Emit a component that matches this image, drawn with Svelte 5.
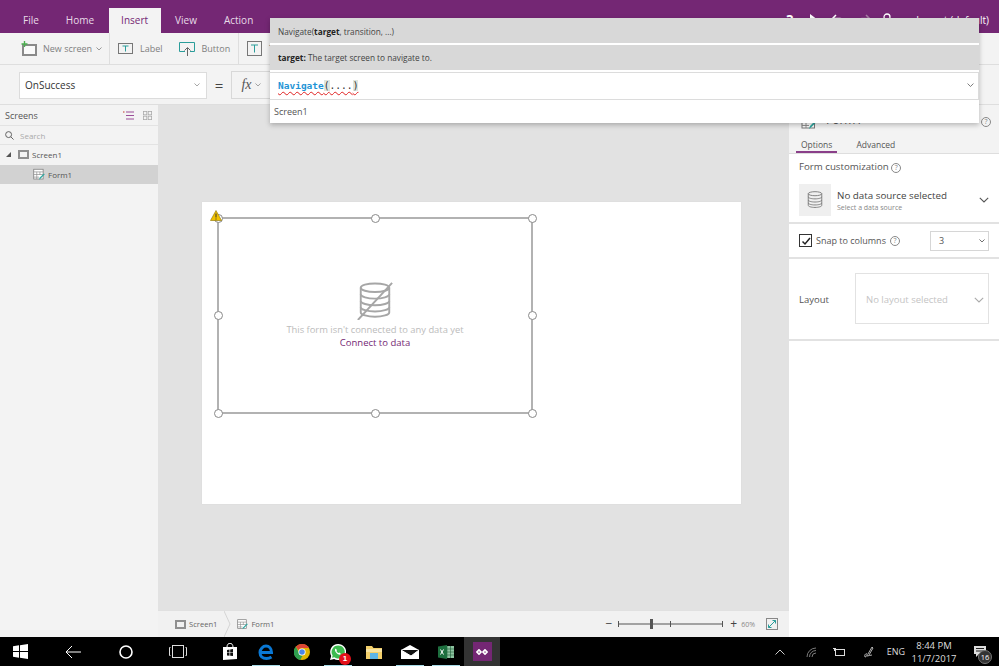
<script lang="ts">
  const tabs = ["File", "Home", "Insert", "View", "Action"];
  const handles = [
    [0, 0], [50, 0], [100, 0],
    [0, 50], [100, 50],
    [0, 100], [50, 100], [100, 100],
  ];
</script>

{#snippet formIcon()}
  <svg class="ico-form" viewBox="0 0 16 16" width="16" height="16" fill="none">
    <rect x="1" y="1" width="12.5" height="13" fill="#fff" stroke="#7a7a7a" />
    <path d="M1 4.5h12.5M1 8h12.5M1 11.5h7M5 4.5V14M9.2 4.5v4" stroke="#8a8a8a" stroke-width=".9" />
    <path d="M8 15l1-3 5.5-5.5 1.2 1.2L10 13.5z" fill="#2fa7a0" />
  </svg>
{/snippet}

{#snippet dbIcon(size: number, color: string, slash: boolean)}
  <svg viewBox="0 0 40 40" width={size} height={size} fill="none" stroke={color} stroke-width="2">
    <ellipse cx="20" cy="6" rx="15" ry="4.5" />
    <path d="M5 6v26c0 2.500 7 4.500 15 4.500S35 34.500 35 32V6" />
    <path d="M5 13c0 2.500 7 4.500 15 4.500S35 15.500 35 13M5 20c0 2.500 7 4.500 15 4.500S35 22.500 35 20M5 26.500c0 2.500 7 4.500 15 4.500s15-2 15-4.500" />
    {#if slash}<path d="M38 1L2 40" />{/if}
  </svg>
{/snippet}

{#snippet chevron(w: number, color: string)}
  <svg class="chev" viewBox="0 0 10 6" width={w} height={w * 0.6} fill="none" stroke={color} stroke-width="1.100"><path d="M.8.8L5 5l4.200-4.200" /></svg>
{/snippet}

{#snippet help()}
  <span class="help">?</span>
{/snippet}

<div class="app">
  <header class="tabs">
    {#each tabs as t}
      <span class="tab" class:active={t === "Insert"}>{t}</span>
    {/each}
    <div class="quick">
      <span class="q">?</span>
      <svg viewBox="0 0 10 12" width="10" height="12" fill="#fff"><path d="M1 0l8 6-8 6z" /></svg>
      <svg viewBox="0 0 14 12" width="14" height="12" fill="none" stroke="#fff" stroke-width="1.500"><path d="M5 1L1.500 4.500 5 8M2 4.500h7a3.500 3.500 0 010 7H6" /></svg>
      <svg viewBox="0 0 14 12" width="14" height="12" fill="none" stroke="#a77fa5" stroke-width="1.500"><path d="M9 1l3.500 3.500L9 8M12 4.500H5a3.500 3.500 0 000 7h3" /></svg>
      <svg class="person" viewBox="0 0 12 14" width="12" height="14" fill="none" stroke="#fff" stroke-width="1.300"><circle cx="6" cy="4" r="3" /><path d="M1 13c0-3 2-5 5-5s5 2 5 5" /></svg>
      <span class="q-text">Layout (default)</span>
    </div>
  </header>

  <div class="toolbar">
    <div class="group first">
      <svg viewBox="0 0 16 15" width="16" height="15" fill="none">
        <rect x="2" y="4" width="13" height="10" fill="#fafafa" stroke="#8a8a8a" stroke-width="2" />
        <path d="M3.500 0v6M.5 3h6" stroke="#4caf50" stroke-width="1.400" />
      </svg>
      <span>New screen</span>
      {@render chevron(6, "#666")}
    </div>
    <div class="group">
      <svg viewBox="0 0 15 11" width="15" height="11" fill="none">
        <rect x=".5" y=".5" width="14" height="10" stroke="#777" />
        <path d="M4.500 3h6M7.500 3v5.500" stroke="#2a9d9a" />
      </svg>
      <span>Label</span>
      <svg class="gap-l" viewBox="0 0 16 14" width="16" height="14" fill="none">
        <path d="M6 9.500H.5V.5h15v9H11" stroke="#2a9d9a" />
        <path d="M8.500 14V6M5.500 8.500l3-3 3 3" stroke="#666" />
      </svg>
      <span>Button</span>
    </div>
    <div class="group">
      <svg viewBox="0 0 15 15" width="15" height="15" fill="none">
        <rect x=".5" y=".5" width="14" height="14" stroke="#777" />
        <path d="M4 4h7M7.500 4v7.500" stroke="#2a9d9a" />
      </svg>
      <span>T</span>
    </div>
  </div>

  <div class="formula">
    <div class="prop">
      <span>OnSuccess</span>
      {@render chevron(6, "#777")}
    </div>
    <span class="equals">=</span>
    <div class="fx"><i>fx</i>{@render chevron(6, "#777")}</div>
  </div>

  <div class="main">
    <aside class="left">
      <div class="left-head">
        <span>Screens</span>
        <div class="views">
          <svg viewBox="0 0 11 9" width="11" height="9" fill="none" stroke="#9b4f9a" stroke-width="1.100"><path d="M3 1h8M3 4.500h8M3 8h8" /><path d="M0 1h1.500" stroke="#c0392b" /></svg>
          <svg viewBox="0 0 9 9" width="9" height="9" fill="none" stroke="#aaa" stroke-width=".8"><rect x=".4" y=".4" width="3.400" height="3.400" /><rect x="5.200" y=".4" width="3.400" height="3.400" /><rect x=".4" y="5.200" width="3.400" height="3.400" /><rect x="5.200" y="5.200" width="3.400" height="3.400" /></svg>
        </div>
      </div>
      <div class="search">
        <svg viewBox="0 0 10 10" width="9" height="9" fill="none" stroke="#555"><circle cx="4" cy="4" r="3.300" /><path d="M6.500 6.500L9.500 9.500" /></svg>
        <span>Search</span>
      </div>
      <div class="tree-row">
        <span class="tri"></span>
        <span class="screen-ico"></span>
        <span>Screen1</span>
      </div>
      <div class="tree-row sel">
        {@render formIcon()}
        <span>Form1</span>
      </div>
    </aside>

    <section class="center">
      <div class="canvas">
        <div class="board">
          <div class="form">
            <svg class="warn" viewBox="0 0 12 11" width="12" height="11">
              <path d="M6 .5L11.500 10.500H.5z" fill="#f2c200" stroke="#8a7000" stroke-width=".6" />
              <path d="M6 3.500v4M6 8.500v1" stroke="#333" />
            </svg>
            <div class="handles">
              {#each handles as [x, y]}
                <span class="handle" style="left:{x}%;top:{y}%"></span>
              {/each}
            </div>
            <div class="empty">
              {@render dbIcon(38, "#a6a6a6", true)}
              <span class="empty-text">This form isn't connected to any data yet</span>
              <span class="connect">Connect to data</span>
            </div>
          </div>
        </div>
      </div>
      <footer class="status">
        <span class="crumb">
          <span class="screen-ico small"></span>
          <span>Screen1</span>
        </span>
        <svg class="crumb-sep" viewBox="0 0 7 26" width="7" height="26" fill="none" stroke="#d4d4d4"><path d="M0 0l6 13-6 13" /></svg>
        <span class="crumb">
          {@render formIcon()}
          <span>Form1</span>
        </span>
        <div class="zoom">
          <span class="zbtn">−</span>
          <svg class="slider" viewBox="0 0 105 10" width="105" height="10" fill="#555">
            <rect x="0" y="4.500" width="105" height="1" />
            <rect x="0" y="2" width="1" height="6" />
            <rect x="104" y="2" width="1" height="6" />
            <rect x="52" y="2" width="1" height="6" />
            <rect x="32" y="0" width="3" height="10" />
          </svg>
          <span class="zbtn">+</span>
          <span class="pct">60%</span>
          <svg viewBox="0 0 12 12" width="12" height="12" fill="none">
            <rect x=".5" y=".5" width="11" height="11" stroke="#888" />
            <path d="M2.500 9.500l7-7M2.500 6.500v3h3M6.500 2.500h3v3" stroke="#2a9d9a" />
          </svg>
        </div>
      </footer>
    </section>

    <aside class="right">
      <div class="right-top">
        <div class="right-title">
          {@render formIcon()}
          <span class="title-text">Form1</span>
          <span class="spacer"></span>
          {@render help()}
        </div>
        <div class="right-tabs">
          <span class="rtab on">Options</span>
          <span class="rtab">Advanced</span>
        </div>
      </div>
      <div class="block custom">
        <div class="block-title">Form customization {@render help()}</div>
        <div class="source">
          <span class="source-ico">{@render dbIcon(18, "#777", false)}</span>
          <div class="source-text">
            <span class="src-main">No data source selected</span>
            <span class="src-sub">Select a data source</span>
          </div>
          {@render chevron(10, "#555")}
        </div>
      </div>
      <div class="block snap">
        <span class="check">
          <svg viewBox="0 0 10 10" width="10" height="10" fill="none" stroke="#222" stroke-width="1.500"><path d="M1.500 5.500l2.500 2.500 5-6" /></svg>
        </span>
        <span>Snap to columns</span>
        {@render help()}
        <span class="spacer"></span>
        <div class="num"><span>3</span>{@render chevron(6, "#222")}</div>
      </div>
      <div class="block layout">
        <span class="layout-label">Layout</span>
        <div class="layout-box">
          <span>No layout selected</span>
          {@render chevron(10, "#aaa")}
        </div>
      </div>
    </aside>
  </div>

  <!-- formula suggestion popup, sits over the ribbon and the panels -->
  <div class="popup">
    <div class="hint first-hint">Navigate(<b>target</b>, transition, ...)</div>
    <div class="hint">
      <span><b>target:</b> The target screen to navigate to.</span>
    </div>
    <div class="editor">
      <span class="code"><span class="kw">Navigate</span><span class="par">(</span>....<span class="par">)</span></span>
      {@render chevron(7, "#555")}
    </div>
    <div class="suggest">Screen1</div>
  </div>

  <footer class="taskbar">
    <div class="cell wide">
      <svg viewBox="0 0 15 15" width="15" height="15" fill="#fff"><path d="M0 2.200L6 1.300V7H0zM7 1.200L15 0v7H7zM0 8h6v5.700L0 12.800zM7 8h8v7l-8-1.200z" /></svg>
    </div>
    <div class="cell nav">
      <svg viewBox="0 0 16 14" width="16" height="14" fill="none" stroke="#fff"><path d="M7 1L1 7l6 6M1 7h15" /></svg>
    </div>
    <div class="cell nav">
      <svg viewBox="0 0 14 14" width="14" height="14" fill="none" stroke="#fff" stroke-width="1.600"><circle cx="7" cy="7" r="6" /></svg>
    </div>
    <div class="cell nav">
      <svg viewBox="0 0 18 13" width="18" height="13" fill="none" stroke="#ddd"><rect x="3.500" y=".5" width="11" height="12" /><path d="M1.500 2.500H.5v8h1M16.500 2.500h1v8h-1" /></svg>
    </div>
    <div class="cell store">
      <svg viewBox="0 0 16 17" width="16" height="17"><path d="M1 4h14v12l-14 1z" fill="#fff" /><path d="M5 4c0-5 6-5 6 0" fill="none" stroke="#fff" /><path d="M5 7l2.500-.4v2.800H5zM8.200 6.500l2.800-.4v3.300H8.200zM5 10h2.500v2.700L5 12.500zM8.200 10H11v3l-2.800-.3z" fill="#111" /></svg>
    </div>
    <div class="cell run">
      <svg viewBox="0 0 16 16" width="16" height="16" fill="none" stroke="#0a78d4" stroke-width="3"><path d="M2 8.500h11.500c0-4-2.500-6.500-5.500-6.500S2 5 2 8.500 4.500 14.500 8.500 14.500c2 0 3.500-.5 5-1.500" /></svg>
    </div>
    <div class="cell">
      <svg viewBox="0 0 16 16" width="16" height="16"><circle cx="8" cy="8" r="8" fill="#e0b400" /><path d="M8 0a8 8 0 017 4H8a4 4 0 00-3.500 2L1.800 2.800A8 8 0 018 0z" fill="#db4437" /><path d="M1.800 2.800L5 8.500a4 4 0 003.500 3.500L6 16A8 8 0 011.800 2.800z" fill="#2e9e4f" /><circle cx="8" cy="8" r="3.600" fill="#fff" /><circle cx="8" cy="8" r="2.800" fill="#4a86e8" /></svg>
    </div>
    <div class="cell run wa">
      <svg viewBox="0 0 16 16" width="16" height="16"><path d="M8 0a8 8 0 00-6.800 12L0 16l4.100-1.100A8 8 0 108 0z" fill="#fff" /><path d="M8 1.500a6.500 6.500 0 00-5.400 10l-.6 2.300 2.400-.6A6.500 6.500 0 108 1.500z" fill="#3dbb4f" /><path d="M5.500 4.500c-1 1-.6 2.800 1 4.500s3.500 2.200 4.500 1l-1.500-1.500-1 .5c-.8-.3-1.600-1.100-2-2l.5-1z" fill="#fff" /></svg>
      <span class="badge">1</span>
    </div>
    <div class="cell">
      <svg viewBox="0 0 16 14" width="16" height="14"><path d="M0 1h6l1.500 2H16v11H0z" fill="#f2cf6b" /><rect x="0" y="4" width="16" height="3" fill="#f8e3a0" /><rect x="4" y="8" width="8" height="6" fill="#5db5e8" /></svg>
    </div>
    <div class="cell run">
      <svg viewBox="0 0 18 14" width="18" height="14"><path d="M0 5l9-5 9 5v9H0z" fill="#fff" /><path d="M0 5l18 0-8 6z" fill="#111" /><path d="M0 5l10 6 8-6" fill="none" stroke="#fff" /></svg>
    </div>
    <div class="cell run">
      <svg viewBox="0 0 16 14" width="16" height="14"><rect x="6" y="1" width="10" height="12" fill="#8dc3a0" /><path d="M9 1v12M12.500 1v12M6 4h10M6 7h10M6 10h10" stroke="#1e5d38" stroke-width=".6" /><path d="M0 1.500L9 0v14L0 12.500z" fill="#1e6f3f" /><path d="M2.500 4.500l3 5M5.500 4.500l-3 5" stroke="#fff" stroke-width="1" /></svg>
    </div>
    <div class="cell current">
      <span class="pa">
        <svg viewBox="0 0 12 6" width="12" height="6" fill="none" stroke="#fff" stroke-width="1.700"><path d="M3 .9L.9 3 3 5.100 5 3zM9 .9L7 3l2 2.100L11.100 3z" /></svg>
      </span>
    </div>

    <div class="tray">
      <svg viewBox="0 0 10 6" width="10" height="6" fill="none" stroke="#ccc"><path d="M.5 5.500L5 1l4.500 4.500" /></svg>
      <svg class="t1" viewBox="0 0 10 10" width="10" height="10" fill="none" stroke="#999" stroke-width=".8"><path d="M1 10a9 9 0 019-9M3.500 10a6.500 6.500 0 016.500-6.500M6 10a4 4 0 014-4" /></svg>
      <svg class="t2" viewBox="0 0 12 8" width="12" height="8" fill="none" stroke="#ddd"><rect x="2.500" y="1.500" width="9" height="6" /><path d="M0 .5h3M1.500 0v3" /></svg>
      <svg class="t3" viewBox="0 0 10 12" width="10" height="12" fill="none" stroke="#ddd" stroke-width=".8"><path d="M1 11c-1-2 1-4 2-3s-1 3-2 3zM4 8l4-7 1 1-4 7M3 10c2 0 3-1 5-1" /></svg>
      <span class="eng">ENG</span>
      <div class="clock"><span>8:44 PM</span><span>11/7/2017</span></div>
      <span class="notif">
        <svg viewBox="0 0 12 11" width="12" height="11"><path d="M0 0h12v8H5L2 11V8H0z" fill="#ddd" /><path d="M2 2.500h8M2 5h8" stroke="#222" /></svg>
        <span class="count">16</span>
      </span>
    </div>
  </footer>
</div>

<style>
  :global(body) {
    margin: 0;
    background: #000;
  }

  .app {
    position: relative;
    width: 999px;
    height: 666px;
    display: flex;
    flex-direction: column;
    overflow: hidden;
    font-family: "Open Sans", "Noto Sans", sans-serif;
    font-size: 9px;
    color: #555;
    background: #f3f3f3;
  }

  svg {
    flex-shrink: 0;
  }

  .tabs {
    flex: 0 0 33px;
    display: flex;
    align-items: flex-end;
    padding-left: 9.500px;
    background: #742774;
    color: #e8dbe8;
    font-size: 10px;
    box-sizing: border-box;
  }

  .tab {
    box-sizing: border-box;
    height: 25px;
    padding: 5px 13.500px 0;
    white-space: nowrap;
  }

  .tab.active {
    background: #f3f3f3;
    color: #742774;
    padding: 5px 12.500px 0;
    margin: 0 1px;
  }

  .quick {
    margin-left: auto;
    display: flex;
    align-items: center;
    gap: 12px;
    height: 33px;
    padding: 6px 10px 0 0;
    box-sizing: border-box;
    color: #fff;
  }

  .q {
    font-size: 14px;
    font-weight: 700;
    margin-right: 4px;
  }

  .person {
    margin-left: -2px;
  }

  .q-text {
    font-size: 10px;
    margin-left: 11px;
  }

  .toolbar {
    flex: 0 0 32px;
    display: flex;
    align-items: stretch;
    border-bottom: 1px solid #dedede;
    box-sizing: border-box;
    font-size: 9px;
    color: #808080;
  }

  .group {
    display: flex;
    align-items: center;
    gap: 7px;
    padding: 0 8px;
    border-right: 1px solid #dedede;
    white-space: nowrap;
  }

  .group.first {
    width: 110px;
    box-sizing: border-box;
    padding: 0 0 0 21px;
    gap: 6px;
  }

  .group.first .chev {
    margin-left: -2px;
  }

  .gap-l {
    margin-left: 9px;
  }

  .group:last-child {
    border-right: 0;
  }

  .formula {
    flex: 0 0 40px;
    display: flex;
    align-items: center;
    border-bottom: 1px solid #dedede;
    box-sizing: border-box;
    padding: 1px 0 0 19px;
  }

  .prop {
    box-sizing: border-box;
    width: 188px;
    height: 27px;
    display: flex;
    align-items: center;
    justify-content: space-between;
    padding: 0 6px 0 5px;
    background: #fff;
    border: 1px solid #dcdcdc;
    font-size: 10px;
    color: #333;
  }

  .equals {
    width: 24px;
    text-align: center;
    font-size: 15px;
    color: #444;
  }

  .fx {
    box-sizing: border-box;
    width: 40px;
    height: 28px;
    display: flex;
    align-items: center;
    justify-content: center;
    gap: 3px;
    border: 1px solid #d8d8d8;
    color: #555;
  }

  .fx i {
    font-family: "Liberation Serif", serif;
    font-size: 14px;
  }

  .main {
    flex: 1;
    min-height: 0;
    display: flex;
  }

  .left {
    flex: 0 0 158px;
    box-sizing: border-box;
    font-size: 8px;
  }

  .left-head {
    height: 21px;
    display: flex;
    align-items: center;
    justify-content: space-between;
    padding: 0 6px 0 5px;
    box-sizing: border-box;
    border-bottom: 1px solid #e3e3e3;
    font-size: 9px;
  }

  .views {
    display: flex;
    gap: 9px;
    align-items: center;
  }

  .search {
    height: 19px;
    display: flex;
    align-items: center;
    gap: 6px;
    padding-left: 5px;
    box-sizing: border-box;
    border-bottom: 1px solid #e3e3e3;
    color: #aaa;
    font-size: 8px;
  }

  .tree-row {
    box-sizing: border-box;
    height: 20px;
    display: flex;
    align-items: center;
    gap: 3px;
    padding: 0 0 1px 6px;
  }

  .tree-row.sel {
    height: 19px;
    background: #d2d2d2;
    padding-left: 33px;
    gap: 3px;
  }

  .sel .ico-form {
    width: 12px;
    height: 13px;
  }

  .tri {
    width: 0;
    height: 0;
    margin-right: 4px;
    border-left: 5px solid transparent;
    border-bottom: 5px solid #555;
  }

  .screen-ico {
    box-sizing: border-box;
    width: 11px;
    height: 9px;
    border: 2px solid #8f8f8f;
    display: inline-block;
  }

  .screen-ico.small {
    margin-right: 3px;
  }

  .center {
    flex: 1;
    min-width: 0;
    display: flex;
    flex-direction: column;
    background: #e2e2e2;
  }

  .canvas {
    flex: 1;
    padding: 97px 0 0 44px;
    box-sizing: border-box;
  }

  .board {
    width: 539px;
    height: 302px;
    background: #fff;
    padding: 15px 0 0 15px;
    box-sizing: border-box;
    box-shadow: 0 0 1px #d0d0d0;
  }

  .form {
    position: relative;
    width: 316px;
    height: 197px;
    box-sizing: border-box;
    border: 2px solid #b2b2b2;
    display: flex;
    flex-direction: column;
  }

  .warn {
    position: absolute;
    left: -9px;
    top: -9px;
    z-index: 2;
  }

  /* handle layer runs through the middle of the 2px border */
  .handles {
    position: absolute;
    inset: -1px;
  }

  .handle {
    position: absolute;
    box-sizing: border-box;
    width: 9px;
    height: 9px;
    margin: -4.500px 0 0 -4.500px;
    border: 1px solid #8a8a8a;
    border-radius: 50%;
    background: #fff;
  }

  .empty {
    flex: 1;
    display: flex;
    flex-direction: column;
    align-items: center;
    padding-top: 63px;
  }

  .empty-text {
    color: #bcbcbc;
    font-size: 9.400px;
    line-height: 13px;
    margin-top: 3px;
  }

  .connect {
    color: #742774;
    font-size: 9.500px;
    line-height: 13px;
  }

  .status {
    flex: 0 0 26px;
    display: flex;
    align-items: center;
    padding-left: 17px;
    box-sizing: border-box;
    background: #f1f1f1;
    border-top: 1px solid #e0e0e0;
    font-size: 7.600px;
    color: #666;
  }

  .crumb {
    display: flex;
    align-items: center;
  }

  .crumb .ico-form {
    width: 11px;
    height: 11px;
    margin-right: 3px;
  }

  .crumb-sep {
    margin: 0 6px 0 7px;
  }

  .zoom {
    margin-left: auto;
    display: flex;
    align-items: center;
    gap: 6px;
    padding-right: 11px;
  }

  .slider {
    margin-right: 1px;
  }

  .zbtn {
    font-size: 12px;
    color: #444;
    line-height: 1;
  }

  .pct {
    font-size: 7px;
    margin: 0 5px 0 -2px;
    color: #888;
  }

  .right {
    flex: 0 0 210px;
    background: #fff;
    border-left: 0;
    font-size: 9.500px;
    box-sizing: border-box;
  }

  .right-top {
    height: 49px;
    background: #f3f3f3;
    border-bottom: 1px solid #dedede;
    box-sizing: border-box;
    display: flex;
    flex-direction: column;
    justify-content: flex-end;
  }

  .right-title {
    display: flex;
    align-items: center;
    gap: 8px;
    padding: 0 8px 7px 11px;
    font-size: 12px;
  }

  .title-text {
    margin-bottom: 4px;
  }

  .right-title .ico-form {
    width: 18px;
    height: 16px;
  }

  .spacer {
    flex: 1;
  }

  .help {
    display: inline-flex;
    align-items: center;
    justify-content: center;
    width: 8px;
    height: 8px;
    border: 1px solid #888;
    border-radius: 50%;
    font-size: 7px;
    color: #888;
    line-height: 1;
  }

  .right-tabs {
    display: flex;
    font-size: 8.500px;
    gap: 14px;
    padding-left: 7px;
  }

  .rtab {
    padding: 0 5px 1px;
  }

  .rtab.on {
    border-bottom: 2px solid #8a3f89;
  }

  .rtab:not(.on) {
    padding-bottom: 3px;
  }

  .block {
    box-sizing: border-box;
    border-bottom: 2px solid #e2e2e2;
    padding: 0 10px;
  }

  .custom {
    height: 70px;
    padding-top: 6px;
  }

  .block-title {
    font-size: 9.700px;
    line-height: 14px;
    margin-bottom: 10px;
  }

  .source {
    display: flex;
    align-items: center;
    gap: 6px;
    padding-right: 0;
  }

  .source-ico {
    width: 32px;
    height: 32px;
    background: #efefef;
    display: flex;
    align-items: center;
    justify-content: center;
  }

  .source-text {
    flex: 1;
    display: flex;
    flex-direction: column;
  }

  .src-main {
    font-size: 9.800px;
    line-height: 14px;
    color: #444;
  }

  .src-sub {
    font-size: 7px;
    line-height: 9px;
    color: #888;
  }

  .snap {
    height: 35px;
    display: flex;
    align-items: center;
    gap: 4px;
    font-size: 9px;
  }

  .check {
    box-sizing: border-box;
    width: 13px;
    height: 13px;
    border: 1px solid #333;
    display: flex;
    align-items: center;
    justify-content: center;
  }

  .num {
    box-sizing: border-box;
    width: 59px;
    height: 20px;
    display: flex;
    align-items: center;
    justify-content: space-between;
    padding: 0 3px 0 8px;
    border: 1px solid #d6d6d6;
  }

  .layout {
    height: 82px;
    display: flex;
    align-items: center;
    justify-content: space-between;
    padding-bottom: 1px;
  }

  .layout-label {
    padding-top: 2px;
  }

  .layout-box {
    box-sizing: border-box;
    width: 134px;
    height: 51px;
    display: flex;
    align-items: center;
    justify-content: space-between;
    padding: 2px 4px 0 10px;
    border: 1px solid #e2e2e2;
    color: #c4c4c4;
  }

  .popup {
    position: absolute;
    left: 270px;
    top: 18px;
    width: 709px;
    display: flex;
    flex-direction: column;
    box-shadow: 0 2px 5px rgba(0, 0, 0, 0.25);
    background: #fff;
    font-size: 8.250px;
    color: #444;
  }

  .hint {
    box-sizing: border-box;
    height: 25px;
    display: flex;
    align-items: center;
    padding-left: 8px;
    background: #d8d8d8;
    margin-bottom: 2px;
    white-space: pre;
  }

  .first-hint {
    padding-top: 2px;
  }

  .hint b {
    color: #222;
  }

  .editor {
    box-sizing: border-box;
    height: 28px;
    display: flex;
    align-items: center;
    justify-content: space-between;
    padding: 0 4px 1px 8px;
    border: 1px solid #dcdcdc;
    border-left: 0;
    background: #fff;
  }

  .code {
    font-family: "DejaVu Sans Mono", "Liberation Mono", monospace;
    font-size: 9.600px;
    color: #333;
    text-decoration: underline wavy #e02020 1px;
    text-underline-offset: 2px;
  }

  .kw {
    color: #1f95d6;
    font-weight: 700;
    font-size: 9.500px;
  }

  .par {
    background: #dfe6df;
  }

  .suggest {
    height: 23px;
    line-height: 24px;
    padding-left: 4px;
    font-size: 9px;
    color: #555;
  }

  .taskbar {
    flex: 0 0 29px;
    display: flex;
    background: #000;
    color: #ddd;
    font-size: 9px;
  }

  .cell {
    position: relative;
    box-sizing: border-box;
    width: 36px;
    display: flex;
    align-items: center;
    justify-content: center;
  }

  .cell.wide {
    width: 40px;
  }

  .cell.nav {
    width: 52.500px;
    padding-left: 14px;
  }

  .cell.store {
    margin-left: 14.500px;
  }

  .cell.run::after {
    content: "";
    position: absolute;
    left: 4px;
    right: 4px;
    bottom: 0;
    height: 1.500px;
    background: #a8dce8;
  }

  .badge {
    position: absolute;
    right: 5px;
    bottom: 1px;
    width: 12px;
    height: 12px;
    border-radius: 50%;
    background: #e3101a;
    color: #fff;
    font-family: "Liberation Sans", sans-serif;
    font-size: 8px;
    font-weight: 700;
    text-align: center;
    line-height: 12px;
  }

  .cell.current {
    background: #333;
  }

  .pa {
    width: 19px;
    height: 19px;
    display: flex;
    align-items: center;
    justify-content: center;
    background: #742774;
  }

  .tray {
    margin-left: auto;
    display: flex;
    align-items: center;
    padding-right: 13px;
  }

  .t1 {
    margin-left: 21px;
  }

  .t2 {
    margin-left: 17px;
  }

  .t3 {
    margin-left: 19px;
  }

  .eng {
    margin-left: 13px;
  }

  .clock {
    margin-left: 7px;
    display: flex;
    flex-direction: column;
    align-items: center;
    line-height: 13px;
    width: 44px;
    font-size: 9.500px;
  }

  .notif {
    position: relative;
    margin-left: 18px;
    display: flex;
  }

  .count {
    position: absolute;
    left: 4px;
    top: 4px;
    width: 12px;
    height: 12px;
    border-radius: 50%;
    background: #333;
    border: 1px solid #777;
    font-size: 7.500px;
    line-height: 12px;
    text-align: center;
    color: #fff;
  }
</style>
